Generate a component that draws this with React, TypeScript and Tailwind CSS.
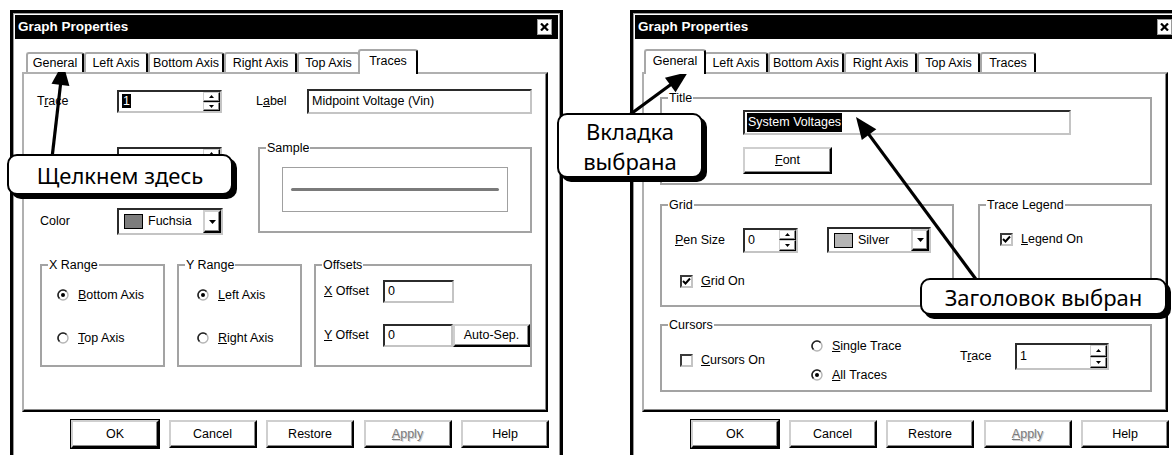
import React from "react";

type C = { className?: string; children?: React.ReactNode };

function Sunken({ className = "", children }: C) {
  return (
    <div
      className={
        "border-2 border-t-[#2b2b2b] border-l-[#2b2b2b] border-r-[#c4c4c4] border-b-[#c4c4c4] bg-white flex items-center overflow-hidden " +
        className
      }
    >
      {children}
    </div>
  );
}

function Raised({ className = "", children }: C) {
  return (
    <div
      className={
        "border-2 border-t-[#cfcfcf] border-l-[#cfcfcf] border-r-black border-b-black shadow-[inset_-1px_-1px_0_#8a8a8a] bg-white flex items-center justify-center " +
        className
      }
    >
      {children}
    </div>
  );
}

function SmallBtn({ className = "", children }: C) {
  return (
    <div
      className={
        "border border-t-[#cfcfcf] border-l-[#cfcfcf] border-r-black border-b-black shadow-[inset_-1px_-1px_0_#8a8a8a] bg-white flex items-center justify-center " +
        className
      }
    >
      {children}
    </div>
  );
}

function Spin({ className = "", value, selected }: C & { value: string; selected?: boolean }) {
  return (
    <Sunken className={className}>
      <div className="flex-1 pl-[3px] leading-none">
        {selected ? <span className="bg-black text-white px-[1px]">{value}</span> : value}
      </div>
      <div className="flex flex-col w-[17px] h-full">
        <SmallBtn className="flex-1">
          <svg width="5" height="3" viewBox="0 0 5 3">
            <polygon points="0,3 2.5,0 5,3" fill="#000" />
          </svg>
        </SmallBtn>
        <SmallBtn className="flex-1">
          <svg width="5" height="3" viewBox="0 0 5 3">
            <polygon points="0,0 5,0 2.5,3" fill="#000" />
          </svg>
        </SmallBtn>
      </div>
    </Sunken>
  );
}

function Combo({ className = "", swatch, label }: C & { swatch: string; label: string }) {
  return (
    <Sunken className={className}>
      <div className={"ml-[5px] w-[19px] h-[15px] border border-black " + swatch} />
      <div className="ml-[5px] flex-1">{label}</div>
      <Raised className="w-[18px] h-full">
        <svg width="7" height="4" viewBox="0 0 7 4">
          <polygon points="0,0 7,0 3.5,4" fill="#000" />
        </svg>
      </Raised>
    </Sunken>
  );
}

function Radio({ checked, children }: C & { checked?: boolean }) {
  return (
    <div className="flex items-center h-[16px] gap-[9px]">
      <svg width="12" height="12" viewBox="0 0 12 12">
        <circle cx="6" cy="6" r="5" fill="#fff" stroke="#b5b5b5" strokeWidth="1.4" />
        <path d="M2.46 9.54 A5 5 0 0 1 9.54 2.46" fill="none" stroke="#222" strokeWidth="1.6" />
        {checked && <circle cx="6" cy="6" r="2" fill="#000" />}
      </svg>
      <span>{children}</span>
    </div>
  );
}

function Checkbox({ checked, children }: C & { checked?: boolean }) {
  return (
    <div className="flex items-center h-[15px] gap-[8px]">
      <div className="w-[13px] h-[13px] border-2 border-t-[#3a3a3a] border-l-[#3a3a3a] border-r-[#c4c4c4] border-b-[#c4c4c4] bg-white flex items-center justify-center">
        {checked && (
          <svg width="9" height="9" viewBox="0 0 9 9">
            <polyline points="1,4 3.5,6.5 8,1.5" fill="none" stroke="#000" strokeWidth="2" />
          </svg>
        )}
      </div>
      <span>{children}</span>
    </div>
  );
}

function Group({ label, className = "", children }: C & { label: string }) {
  return (
    <fieldset className={"border-2 border-[#a3a3a3] shrink-0 " + className}>
      <legend className="ml-[6px] px-[1px] leading-[14px]">{label}</legend>
      {children}
    </fieldset>
  );
}

const TAB_NAMES = ["General", "Left Axis", "Bottom Axis", "Right Axis", "Top Axis", "Traces"];
const TAB_W = ["w-[58px]", "w-[64px]", "w-[76px]", "w-[73px]", "w-[63px]", "w-[56px]"];
const TAB_W_SEL = ["w-[62px]", "w-[68px]", "w-[80px]", "w-[77px]", "w-[67px]", "w-[60px]"];

function Tabs({ selected }: { selected: number }) {
  return (
    <div className="flex items-end h-[23px] mt-[10px] ml-[11px] relative z-10">
      {TAB_NAMES.map((n, i) =>
        i === selected ? (
          <div
            key={n}
            className={
              "relative z-10 -mx-[2px] -mb-[2px] h-[25px] bg-white border-t-2 border-l-2 border-r-2 border-t-[#a8a8a8] border-l-[#a8a8a8] border-r-black rounded-t-[3px] flex items-center justify-center pb-[3px] " +
              TAB_W_SEL[i]
            }
          >
            {n}
          </div>
        ) : (
          <div
            key={n}
            className={
              "h-[20px] bg-white border-t-2 border-l-2 border-r-2 border-t-[#a8a8a8] border-l-[#a8a8a8] border-r-black rounded-t-[3px] flex items-center justify-center " +
              TAB_W[i]
            }
          >
            {n}
          </div>
        )
      )}
    </div>
  );
}

function Dialog({ selected, children }: C & { selected: number }) {
  return (
    <div className="w-[553px] h-[465px] shrink-0 border-[3px] border-black p-[2px] bg-white shadow-[inset_0_0_0_1px_#9a9a9a] flex flex-col">
      <div className="h-[24px] bg-black flex items-center justify-between pl-[3px] pr-[6px]">
        <span className="text-white font-bold text-[13.5px]">Graph Properties</span>
        <div className="w-[15px] h-[16px] bg-white border border-[#9a9a9a] flex items-center justify-center">
          <svg width="9" height="8" viewBox="0 0 9 8">
            <path d="M1 0.5 L8 7.5 M8 0.5 L1 7.5" stroke="#000" strokeWidth="2.2" />
          </svg>
        </div>
      </div>
      <Tabs selected={selected} />
      <div className="ml-[7px] w-[526px] h-[340px] border-2 border-t-[#b0b0b0] border-l-[#b0b0b0] border-r-black border-b-black shadow-[inset_-1px_-1px_0_#8a8a8a]">
        {children}
      </div>
      <div className="flex mt-[8px] pl-[56px] gap-[9.5px]">
        <Raised className="w-[88px] h-[28px] outline outline-1 outline-black">OK</Raised>
        <Raised className="w-[88px] h-[28px]">Cancel</Raised>
        <Raised className="w-[88px] h-[28px]">Restore</Raised>
        <Raised className="w-[88px] h-[28px]">
          <span className="text-[#7a7a7a] [text-shadow:1px_1px_0_#d0d0d0]">
            <u>A</u>pply
          </span>
        </Raised>
        <Raised className="w-[88px] h-[28px]">Help</Raised>
      </div>
    </div>
  );
}

function TracesPanel() {
  return (
    <div className="flex flex-col pt-[15px]">
      <div className="flex items-center h-[25px]">
        <div className="w-[93px] pl-[13px]">
          T<u>r</u>ace
        </div>
        <Spin className="w-[105px] h-[23px]" value="1" selected />
        <div className="w-[51px] ml-[34px]">
          L<u>a</u>bel
        </div>
        <Sunken className="w-[225px] h-[25px] pl-[3px]">Midpoint Voltage (Vin)</Sunken>
      </div>
      <div className="flex items-start mt-[27px]">
        <div className="w-[234px] flex flex-col pt-[6px]">
          <div className="flex items-center h-[23px]">
            <div className="w-[93px]" />
            <Spin className="w-[105px] h-[23px]" value="" />
          </div>
          <div className="flex items-center mt-[38px] h-[27px]">
            <div className="w-[93px] pl-[16px]">Color</div>
            <Combo className="w-[106px] h-[27px]" swatch="bg-[#7c7c7c]" label="Fuchsia" />
          </div>
        </div>
        <Group label="Sample" className="w-[274px] h-[92px]">
          <div className="ml-[22px] mt-[12px] w-[226px] h-[45px] border border-[#a0a0a0] flex items-center px-[8px]">
            <div className="h-[3px] w-full bg-[#7a7a7a] rounded-full" />
          </div>
        </Group>
      </div>
      <div className="flex mt-[23px] ml-[16px] gap-[12px]">
        <Group label="X Range" className="w-[125px] h-[109px]">
          <div className="flex flex-col pl-[15px] pt-[15px] gap-[27px]">
            <Radio checked>
              <u>B</u>ottom Axis
            </Radio>
            <Radio>
              <u>T</u>op Axis
            </Radio>
          </div>
        </Group>
        <Group label="Y Range" className="w-[125px] h-[109px]">
          <div className="flex flex-col pl-[18px] pt-[15px] gap-[27px]">
            <Radio checked>
              <u>L</u>eft Axis
            </Radio>
            <Radio>
              <u>R</u>ight Axis
            </Radio>
          </div>
        </Group>
        <Group label="Offsets" className="w-[218px] h-[109px]">
          <div className="flex flex-col pl-[8px] pt-[8px] gap-[21px]">
            <div className="flex items-center h-[23px]">
              <div className="w-[59px]">
                <u>X</u> Offset
              </div>
              <Sunken className="w-[71px] h-[23px] pl-[3px]">0</Sunken>
            </div>
            <div className="flex items-center h-[23px]">
              <div className="w-[59px]">
                <u>Y</u> Offset
              </div>
              <Sunken className="w-[70px] h-[23px] pl-[3px]">0</Sunken>
              <Raised className="w-[77px] h-[23px]">Auto-Sep.</Raised>
            </div>
          </div>
        </Group>
      </div>
    </div>
  );
}

function GeneralPanel() {
  return (
    <div className="flex flex-col pl-[16px] pt-[17px]">
      <Group label="Title" className="w-[492px] h-[94px]">
        <div className="flex flex-col pl-[81px] pt-[5px]">
          <Sunken className="w-[328px] h-[25px] pl-[2px]">
            <span className="bg-black text-white px-[1px]">System Voltages</span>
          </Sunken>
          <Raised className="mt-[12px] w-[89px] h-[27px]">
            <span>
              <u>F</u>ont
            </span>
          </Raised>
        </div>
      </Group>
      <div className="flex mt-[13px] gap-[24px]">
        <Group label="Grid" className="w-[294px] h-[109px]">
          <div className="flex items-center pl-[13px] pt-[15px]">
            <div className="w-[68px]">
              <u>P</u>en Size
            </div>
            <Spin className="w-[55px] h-[25px]" value="0" />
            <Combo className="ml-[29px] w-[104px] h-[26px]" swatch="bg-[#b4b4b4]" label="Silver" />
          </div>
          <div className="pl-[18px] mt-[21px]">
            <Checkbox checked>
              <u>G</u>rid On
            </Checkbox>
          </div>
        </Group>
        <Group label="Trace Legend" className="w-[174px] h-[109px]">
          <div className="pl-[20px] pt-[20px]">
            <Checkbox checked>
              <u>L</u>egend On
            </Checkbox>
          </div>
        </Group>
      </div>
      <Group label="Cursors" className="mt-[11px] w-[492px] h-[74px]">
        <div className="flex items-center pl-[18px] pt-[6px]">
          <div className="w-[131px]">
            <Checkbox>
              <u>C</u>ursors On
            </Checkbox>
          </div>
          <div className="w-[149px] flex flex-col gap-[13px]">
            <Radio>
              <u>S</u>ingle Trace
            </Radio>
            <Radio checked>
              <u>A</u>ll Traces
            </Radio>
          </div>
          <div className="flex items-center self-start mt-[5px]">
            <div className="w-[55px]">
              T<u>r</u>ace
            </div>
            <Spin className="w-[94px] h-[27px]" value="1" />
          </div>
        </div>
      </Group>
    </div>
  );
}

function arrow(x1: number, y1: number, x2: number, y2: number, L = 22, W = 9) {
  const dx = x2 - x1;
  const dy = y2 - y1;
  const len = Math.hypot(dx, dy);
  const ux = dx / len;
  const uy = dy / len;
  const bx = x2 - ux * L;
  const by = y2 - uy * L;
  const nx = -uy;
  const ny = ux;
  return {
    line: { x1, y1, x2: bx + ux * 2, y2: by + uy * 2 },
    pts: `${x2},${y2} ${bx + nx * W},${by + ny * W} ${bx - nx * W},${by - ny * W}`,
  };
}

const ARROWS = [arrow(52, 158, 63, 63), arrow(628, 116, 688, 72), arrow(978, 282, 856, 117)];

const CALLOUT =
  "absolute bg-white border-2 border-black rounded-[10px] shadow-[4px_4px_0_#000] flex items-center justify-center text-center font-['Noto_Sans',sans-serif] text-[22px] text-black";

export default function App() {
  return (
    <div className="relative w-[1172px] h-[455px] overflow-hidden bg-white font-['Liberation_Sans',Arial,sans-serif] text-[12.5px] text-black">
      <div className="flex pt-[10px] pl-[10px] gap-[67px]">
        <Dialog selected={5}>
          <TracesPanel />
        </Dialog>
        <Dialog selected={0}>
          <GeneralPanel />
        </Dialog>
      </div>
      <svg className="absolute left-0 top-0 pointer-events-none" width="1172" height="455">
        {ARROWS.map((a, i) => (
          <g key={i}>
            <line {...a.line} stroke="#000" strokeWidth="3.2" />
            <polygon points={a.pts} fill="#000" />
          </g>
        ))}
      </svg>
      <div className={CALLOUT + " left-[7px] top-[154px] w-[226px] h-[41px] leading-none"}>Щелкнем здесь</div>
      <div className={CALLOUT + " left-[557px] top-[113px] w-[146px] h-[65px] flex-col leading-[30px]"}>
        <div>Вкладка</div>
        <div>выбрана</div>
      </div>
      <div className={CALLOUT + " left-[920px] top-[278px] w-[247px] h-[37px] leading-none"}>Заголовок выбран</div>
    </div>
  );
}
